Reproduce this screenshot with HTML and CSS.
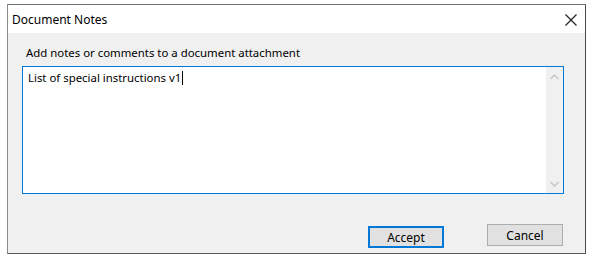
FILE: index.html
```html
<!DOCTYPE html>
<html lang="en">
<head>
    <meta charset="UTF-8">
    <title>Document Notes</title>
    <link rel="stylesheet" href="styles.css">
</head>
<body>
    <div class="window">
        <div class="titlebar">
            <span class="title">Document Notes</span>
            <svg class="close" width="12" height="12" viewBox="0 0 12 12">
                <path d="M0.5 0.5 L11.5 11.5 M11.5 0.5 L0.5 11.5" stroke="#222" stroke-width="1.2" fill="none"/>
            </svg>
        </div>
        <div class="content">
            <div class="label">Add notes or comments to a document attachment</div>
            <div class="notes">
                <div class="notes-text">List of special instructions v1<span class="caret"></span></div>
                <div class="scrollbar">
                    <svg width="9" height="6" viewBox="0 0 9 6"><path d="M0.5 5 L4.5 1 L8.5 5" stroke="#c4c4c4" stroke-width="1.3" fill="none"/></svg>
                    <svg width="9" height="6" viewBox="0 0 9 6"><path d="M0.5 1 L4.5 5 L8.5 1" stroke="#c4c4c4" stroke-width="1.3" fill="none"/></svg>
                </div>
            </div>
            <div class="actions">
                <button class="btn btn-default">Accept</button>
                <button class="btn btn-cancel">Cancel</button>
            </div>
        </div>
    </div>
</body>
</html>
```

FILE: styles.css
```css
/* Page reset */
html, body {
    margin: 0;
    padding: 0;
}

body {
    background: #fff;
    font-family: "Noto Sans", "Open Sans", Arial, sans-serif;
    font-size: 12px;
    color: #000;
}

/* Dialog frame */
.window {
    box-sizing: border-box;
    width: 579px;
    height: 250px;
    margin: 4px 0 0 7px;
    border: 1px solid #8a8a8a;
    border-top-color: #6e6e6e;
    border-right-color: #4a4a4a;
    border-bottom-color: #5a5a5a;
    display: flex;
    flex-direction: column;
}

.titlebar {
    height: 28px;
    background: #fff;
    display: flex;
    align-items: center;
    justify-content: space-between;
    padding: 0 8px 0 4px;
}

.close {
    margin-top: 1px;
}

.content {
    flex: 1;
    background: #f0f0f0;
    padding: 12px 21px 0 14px;
    display: flex;
    flex-direction: column;
}

.label {
    font-size: 11.4px;
    line-height: 16px;
    padding-left: 4px;
    margin-bottom: 5px;
}

/* Multiline text box */
.notes {
    box-sizing: border-box;
    height: 128px;
    border: 1px solid #0078d7;
    background: #fff;
    display: flex;
}

.notes-text {
    flex: 1;
    padding: 3px 5px;
    font-size: 11.4px;
    line-height: 16px;
}

.caret {
    display: inline-block;
    width: 1px;
    height: 14px;
    background: #000;
    vertical-align: -3px;
    margin-left: 1px;
}

.scrollbar {
    width: 17px;
    background: #f0f0f0;
    display: flex;
    flex-direction: column;
    justify-content: space-between;
    align-items: center;
    padding: 7px 0 6px;
}

/* Buttons */
.actions {
    display: flex;
    justify-content: flex-end;
    align-items: flex-start;
    gap: 43px;
    margin-top: 30px;
    padding-right: 1px;
}

.btn {
    box-sizing: border-box;
    width: 76px;
    height: 22px;
    background: #e1e1e1;
    border: 1px solid #adadad;
    font-family: inherit;
    font-size: 12px;
    color: #000;
    padding: 0;
}

.btn-default {
    border: 2px solid #0078d7;
    margin-top: 2px;
}
```
